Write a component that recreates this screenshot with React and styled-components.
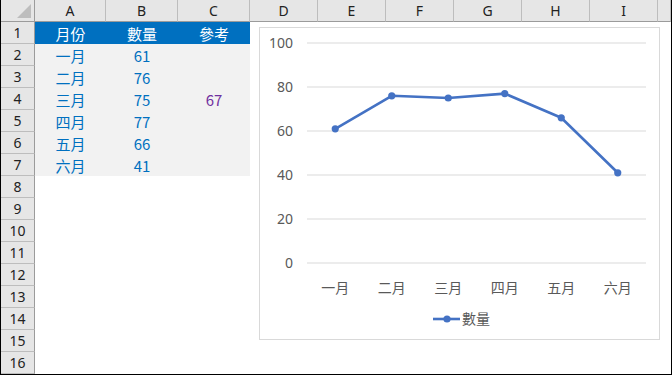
import React from "react";
import styled, { createGlobalStyle } from "styled-components";

const GlobalStyle = createGlobalStyle`
  html, body {
    margin: 0;
    padding: 0;
    background: #ffffff;
  }
  * {
    box-sizing: border-box;
  }
`;

const CJK = `"Noto Sans CJK TC", "Noto Sans", sans-serif`;

const Sheet = styled.div`
  position: relative;
  width: 672px;
  height: 375px;
  overflow: hidden;
  border-left: 1px solid #000;
  border-right: 1px solid #000;
  border-bottom: 1px solid #000;
  display: grid;
  grid-template-columns: 34px 71px 72px 72px repeat(6, 68px) 1fr;
  grid-template-rows: repeat(17, 22px);
  background: #fff;
`;

const Corner = styled.div`
  position: relative;
  background: #e6e6e6;
  border-right: 1px solid #9b9b9b;
  border-bottom: 1px solid #9b9b9b;

  &::after {
    content: "";
    position: absolute;
    right: 3px;
    bottom: 3px;
    width: 0;
    height: 0;
    border-left: 14px solid transparent;
    border-bottom: 14px solid #bdbdbd;
  }
`;

const ColHead = styled.div`
  background: #e6e6e6;
  border-right: 1px solid #bdbdbd;
  border-bottom: 1px solid #9b9b9b;
  display: flex;
  align-items: center;
  justify-content: center;
  font-family: "Noto Sans", sans-serif;
  font-size: 14px;
  color: #222;
`;

const RowHead = styled.div`
  background: #e6e6e6;
  border-right: 1px solid #9b9b9b;
  border-bottom: 1px solid #bdbdbd;
  display: flex;
  align-items: center;
  justify-content: center;
  font-family: "Noto Sans", sans-serif;
  font-size: 14px;
  color: #222;
`;

const Cell = styled.div`
  display: flex;
  align-items: center;
  justify-content: center;
  font-family: ${CJK};
  font-size: 15px;
  line-height: 1;
  background: ${(p) => (p.$head ? "#0070c0" : p.$fill ? "#f2f2f2" : "transparent")};
  color: ${(p) => (p.$head ? "#ffffff" : p.$purple ? "#7030a0" : "#0070c0")};
`;

const ChartBox = styled.div`
  position: absolute;
  left: 258px;
  top: 27px;
  width: 401px;
  height: 313px;
  background: #fff;
  border: 1px solid #d9d9d9;
`;

const cols = ["A", "B", "C", "D", "E", "F", "G", "H", "I", ""];
const months = ["一月", "二月", "三月", "四月", "五月", "六月"];
const values = [61, 76, 75, 77, 66, 41];

const Chart = () => {
  const x0 = 47;
  const x1 = 386;
  const yZero = 235;
  const step = (x1 - x0) / 6;
  const pts = values.map((v, i) => [x0 + step * (i + 0.5), yZero - v * 2.2]);
  const ticks = [0, 20, 40, 60, 80, 100];
  return (
    <svg width="399" height="311" style={{ display: "block" }}>
      {ticks.map((t) => {
        const y = yZero - t * 2.2;
        return (
          <g key={t}>
            <line x1={x0} x2={x1} y1={y} y2={y} stroke="#d9d9d9" strokeWidth="1" />
            <text
              x="33"
              y={y + 5}
              textAnchor="end"
              fontFamily='"Noto Sans", sans-serif'
              fontSize="14"
              fill="#595959"
            >
              {t}
            </text>
          </g>
        );
      })}
      {months.map((m, i) => (
        <text
          key={m}
          x={x0 + step * (i + 0.5)}
          y="265"
          textAnchor="middle"
          fontFamily={CJK}
          fontSize="14"
          fill="#595959"
        >
          {m}
        </text>
      ))}
      <polyline
        points={pts.map((p) => p.join(",")).join(" ")}
        fill="none"
        stroke="#4472c4"
        strokeWidth="2.6"
        strokeLinejoin="round"
        strokeLinecap="round"
      />
      {pts.map((p, i) => (
        <circle key={i} cx={p[0]} cy={p[1]} r="3.6" fill="#4472c4" />
      ))}
      <line x1="173" x2="200" y1="291" y2="291" stroke="#4472c4" strokeWidth="2.6" />
      <circle cx="187" cy="291" r="3.6" fill="#4472c4" />
      <text x="202" y="296" fontFamily={CJK} fontSize="14" fill="#595959">
        數量
      </text>
    </svg>
  );
};

const dataCell = (r, c) => {
  if (r === 1) {
    const heads = ["月份", "數量", "參考"];
    if (c < 3) return <Cell key={c} $head>{heads[c]}</Cell>;
    return <Cell key={c} />;
  }
  if (r <= 7 && c < 3) {
    const i = r - 2;
    let txt = "";
    if (c === 0) txt = months[i];
    if (c === 1) txt = values[i];
    if (c === 2 && r === 4) txt = "67";
    return (
      <Cell key={c} $fill $purple={c === 2}>
        {txt}
      </Cell>
    );
  }
  return <Cell key={c} />;
};

export default function App() {
  const rows = Array.from({ length: 16 }, (_, i) => i + 1);
  return (
    <>
      <GlobalStyle />
      <Sheet>
        <Corner />
        {cols.map((c, i) => (
          <ColHead key={i}>{c}</ColHead>
        ))}
        {rows.map((r) => (
          <React.Fragment key={r}>
            <RowHead>{r}</RowHead>
            {cols.map((_, c) => dataCell(r, c))}
          </React.Fragment>
        ))}
        <ChartBox>
          <Chart />
        </ChartBox>
      </Sheet>
    </>
  );
}
